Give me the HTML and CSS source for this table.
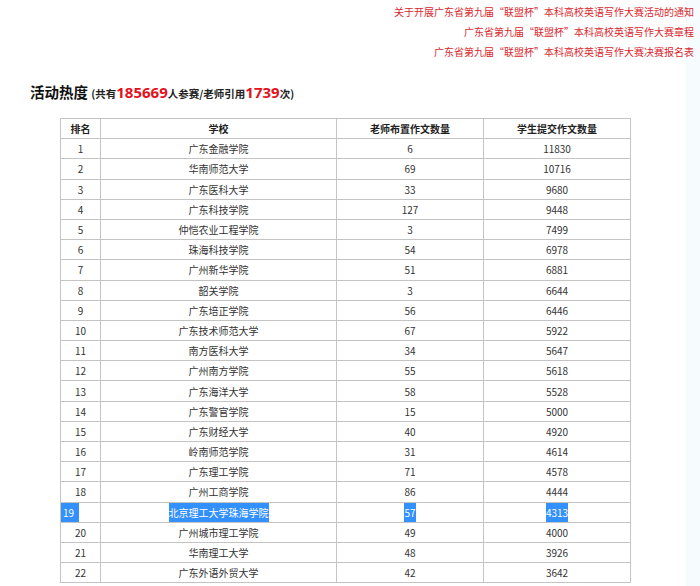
FILE: index.html
```html
<!DOCTYPE html>
<html lang="zh-CN">
<head>
<meta charset="utf-8">
<title>活动热度</title>
<link rel="stylesheet" href="styles.css">
</head>
<body>
<div class="links">
  <a class="link">关于开展广东省第九届“联盟杯”本科高校英语写作大赛活动的通知</a>
  <a class="link">广东省第九届“联盟杯”本科高校英语写作大赛章程</a>
  <a class="link">广东省第九届“联盟杯”本科高校英语写作大赛决赛报名表</a>
</div>
<h2 class="title">活动热度 <span class="sub">(共有<em class="num">185669</em>人参赛/老师引用<em class="num">1739</em>次)</span></h2>
<table class="rank">
  <thead>
    <tr><th class="c1">排名</th><th class="c2">学校</th><th class="c3">老师布置作文数量</th><th class="c4">学生提交作文数量</th></tr>
  </thead>
  <tbody>
    <tr><td>1</td><td>广东金融学院</td><td>6</td><td>11830</td></tr>
    <tr><td>2</td><td>华南师范大学</td><td>69</td><td>10716</td></tr>
    <tr><td>3</td><td>广东医科大学</td><td>33</td><td>9680</td></tr>
    <tr><td>4</td><td>广东科技学院</td><td>127</td><td>9448</td></tr>
    <tr><td>5</td><td>仲恺农业工程学院</td><td>3</td><td>7499</td></tr>
    <tr><td>6</td><td>珠海科技学院</td><td>54</td><td>6978</td></tr>
    <tr><td>7</td><td>广州新华学院</td><td>51</td><td>6881</td></tr>
    <tr><td>8</td><td>韶关学院</td><td>3</td><td>6644</td></tr>
    <tr><td>9</td><td>广东培正学院</td><td>56</td><td>6446</td></tr>
    <tr><td>10</td><td>广东技术师范大学</td><td>67</td><td>5922</td></tr>
    <tr><td>11</td><td>南方医科大学</td><td>34</td><td>5647</td></tr>
    <tr><td>12</td><td>广州南方学院</td><td>55</td><td>5618</td></tr>
    <tr><td>13</td><td>广东海洋大学</td><td>58</td><td>5528</td></tr>
    <tr><td>14</td><td>广东警官学院</td><td>15</td><td>5000</td></tr>
    <tr><td>15</td><td>广东财经大学</td><td>40</td><td>4920</td></tr>
    <tr><td>16</td><td>岭南师范学院</td><td>31</td><td>4614</td></tr>
    <tr><td>17</td><td>广东理工学院</td><td>71</td><td>4578</td></tr>
    <tr><td>18</td><td>广州工商学院</td><td>86</td><td>4444</td></tr>
    <tr class="sel"><td class="left"><span class="hl">19</span></td><td><span class="hl">北京理工大学珠海学院</span></td><td><span class="hl">57</span></td><td><span class="hl">4313</span></td></tr>
    <tr><td>20</td><td>广州城市理工学院</td><td>49</td><td>4000</td></tr>
    <tr><td>21</td><td>华南理工大学</td><td>48</td><td>3926</td></tr>
    <tr><td>22</td><td>广东外语外贸大学</td><td>42</td><td>3642</td></tr>
  </tbody>
</table>
</body>
</html>
```
FILE: styles.css
```css
html, body {
  margin: 0;
  padding: 0;
}
body {
  width: 700px;
  height: 586px;
  overflow: hidden;
  font-family: "Noto Sans CJK SC", "Noto Sans", sans-serif;
  font-size: 10px;
  color: #333;
  background: linear-gradient(to right, #fff 686px, #f6fcfe 686px);
}
.links {
  display: flex;
  flex-direction: column;
  align-items: flex-end;
  padding: 2px 6px 0 0;
}
.link {
  color: #d9272e;
  font-size: 10px;
  line-height: 20px;
  text-decoration: none;
}
.title {
  margin: 19px 0 0 30px;
  font-size: 14.5px;
  line-height: 22px;
  font-weight: bold;
  color: #111;
}
.sub {
  font-size: 10.5px;
  font-weight: bold;
  color: #222;
}
.num {
  font-style: normal;
  color: #e4121e;
  font-size: 15px;
  font-weight: bold;
  font-family: "Open Sans", "Noto Sans", sans-serif;
}
.rank {
  margin: 13px 0 0 60px;
  border-collapse: collapse;
  width: 568px;
  table-layout: fixed;
  border: 1px solid #c4c4c4;
}
.rank th, .rank td {
  border: 1px solid #c4c4c4;
  text-align: center;
  height: 19.2px;
  padding: 0;
  line-height: 19px;
  font-size: 10px;
  color: #333;
}
.rank th {
  font-weight: bold;
  color: #222;
}
.c1 { width: 39px; }
.c2 { width: 235px; }
.c3 { width: 146px; }
.c4 { width: 146px; }
.rank td.left {
  text-align: left;
}
.hl {
  display: inline-block;
  vertical-align: top;
  background: #3390ff;
  color: #fff;
  line-height: 19px;
}
.rank td.left .hl {
  padding: 0 5px 0 2px;
}
```
